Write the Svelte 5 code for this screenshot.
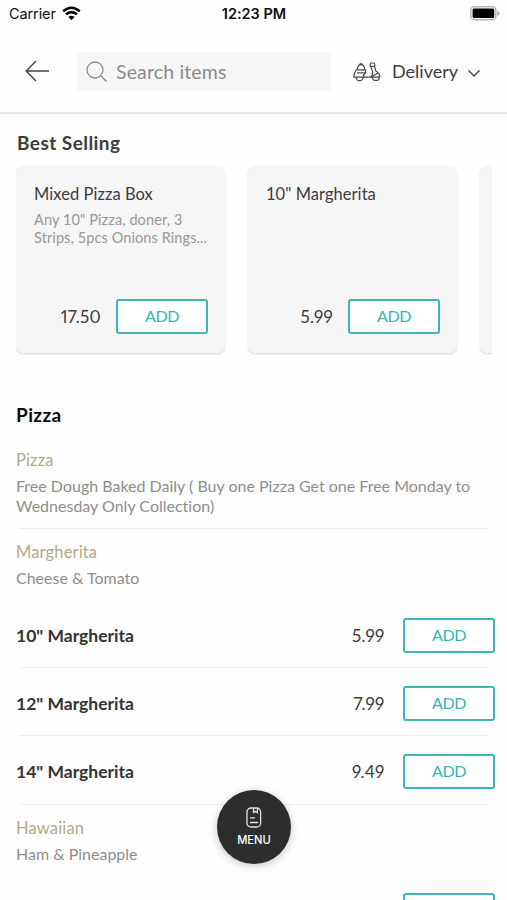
<script lang="ts">
  type Card = { name: string; desc: string; price: string };
  type Item = { name: string; price: string };
  type Group = { title: string; desc: string; items: Item[] };

  const bestSelling: Card[] = [
    { name: 'Mixed Pizza Box', desc: 'Any 10" Pizza, doner, 3 Strips, 5pcs Onions Rings...', price: '17.50' },
    { name: '10" Margherita', desc: '', price: '5.99' },
  ];

  const groups: Group[] = [
    {
      title: 'Pizza',
      desc: 'Free Dough Baked Daily ( Buy one Pizza Get one Free Monday to Wednesday Only Collection)',
      items: [],
    },
    {
      title: 'Margherita',
      desc: 'Cheese & Tomato',
      items: [
        { name: '10" Margherita', price: '5.99' },
        { name: '12" Margherita', price: '7.99' },
        { name: '14" Margherita', price: '9.49' },
      ],
    },
    {
      title: 'Hawaiian',
      desc: 'Ham & Pineapple',
      items: [{ name: '', price: '' }],
    },
  ];
</script>

<div class="screen">
  <div class="status">
    <div class="carrier">
      <span>Carrier</span>
      <svg width="19" height="15" viewBox="0 0 19 15" fill="none" stroke="#000" stroke-width="2.5">
        <path d="M1.2 5.2Q9.5 -1.8 17.8 5.2" />
        <path d="M4 8.4Q9.5 3.8 15 8.4" />
        <path d="M9.5 14.2L6.4 11.1Q9.5 8.6 12.6 11.1Z" fill="#000" stroke="none" />
      </svg>
    </div>
    <span class="clock">12:23 PM</span>
    <svg class="battery" width="31" height="15" viewBox="0 0 31 15">
      <rect x="1.8" y="0.8" width="25" height="13" rx="3.6" fill="#fff" stroke="#b5b5b5" stroke-width="1.5" />
      <rect x="3.6" y="2.6" width="21.6" height="9.4" rx="1.6" fill="#000" />
      <path d="M28.3 5v4.8q2.2-.8 2.2-2.4T28.3 5z" fill="#a8a8a8" />
    </svg>
  </div>

  <header class="header">
    <button class="back" aria-label="Back">
      <svg width="25" height="22" viewBox="0 0 25 22" fill="none" stroke="#444" stroke-width="1.4">
        <path d="M24 11H1.5M11 1L1.2 11L11 21" />
      </svg>
    </button>
    <div class="search">
      <svg width="21" height="21" viewBox="0 0 21 21" fill="none" stroke="#8b8b8b" stroke-width="1.3" stroke-linecap="round">
        <circle cx="9" cy="9" r="8" />
        <path d="M14.8 14.8L20 20" />
      </svg>
      <span>Search items</span>
    </div>
    <button class="mode">
      <svg width="28" height="20" viewBox="0 0 28 20" fill="none" stroke="#4a4a4a" stroke-width="1.2" stroke-linejoin="round">
        <path d="M4.2 7.8C4.4 4.2 5.4 2.6 8 2.6S11.6 4.2 11.8 7.8M6 3Q8 .4 10 3" />
        <path d="M3.4 7.8H12.6V10.8H4M3.4 7.8C1.6 9.8.8 12 .8 15.2H3.2M12.6 10.8Q10.2 12.8 10.4 15.2H17.8Q20 13 19.6 9.8L17.8 4.4" />
        <path d="M17.6 1H20.6Q21.8 1 21.8 2.2V4.4H17.4Q16.6 2.6 17.6 1ZM21.4 4.4L22.8 9Q26.6 10.8 26.8 14.8H25.4M17.8 15.2L25 11" />
        <path d="M3.2 15.2A3.5 3.5 0 0 0 10.2 15.2M3.2 15.2H10.4M19.6 15.2A3.3 3.3 0 0 0 26.2 15.2M17.8 15.2H26.8" />
      </svg>
      <span>Delivery</span>
      <svg class="chevron" width="12" height="7" viewBox="0 0 12 7" fill="none" stroke="#444" stroke-width="1.4" stroke-linecap="round">
        <path d="M.8.8L6 6L11.2.8" />
      </svg>
    </button>
  </header>

  <main>
    <h2 class="best-title">Best Selling</h2>
    <div class="cards">
      {#each bestSelling as card (card.name)}
        <article class="card">
          <h3>{card.name}</h3>
          <p>{card.desc}</p>
          <div class="buy">
            <span class="price">{card.price}</span>
            <button class="add">ADD</button>
          </div>
        </article>
      {/each}
      <article class="card"></article>
    </div>

    <h2 class="category">Pizza</h2>
    {#each groups as group, i (group.title)}
      <section class="group">
        <h4>{group.title}</h4>
        <p>{group.desc}</p>
        {#each group.items as item, j}
          {#if j > 0}<hr />{/if}
          <div class="row">
            <span class="name">{item.name}</span>
            <span class="price">{item.price}</span>
            <button class="add" aria-label="Add">{item.name ? 'ADD' : ''}</button>
          </div>
        {/each}
      </section>
      {#if i < groups.length - 1}<hr />{/if}
    {/each}
  </main>

  <button class="menu">
    <svg width="16" height="21" viewBox="0 0 16 21" fill="none" stroke="#e4e4e4" stroke-width="1.3" stroke-linejoin="round">
      <rect x="1" y="1" width="13.6" height="19" rx="3.8" />
      <path d="M7.5 1V5.8L9.5 4.4L11.5 5.8V1M4 10.8H9M4 15.5H12" />
    </svg>
    <span>MENU</span>
  </button>
</div>

<style>
  :global(body) {
    background: #fff;
  }
  .screen {
    position: relative;
    width: 507px;
    height: 900px;
    overflow: hidden;
    display: flex;
    flex-direction: column;
    background: #fefefe;
    color: #3c3c3c;
    font-family: Lato, 'Open Sans', sans-serif;
    font-variant-ligatures: none;
  }
  h2, h3, h4, p {
    margin: 0;
  }
  button {
    padding: 0;
    border: none;
    background: none;
    color: inherit;
    font: inherit;
  }
  svg {
    display: block;
    flex-shrink: 0;
  }
  hr {
    height: 1px;
    margin: 0 6px 0 3px;
    border: none;
    background: #efefef;
  }

  .status {
    height: 27px;
    flex-shrink: 0;
    display: grid;
    grid-template-columns: 1fr auto 1fr;
    align-items: center;
    padding: 0 7px 0 9px;
    box-sizing: border-box;
    font-family: Inter, sans-serif;
    font-size: 14.5px;
    color: #111;
  }
  .carrier {
    display: flex;
    align-items: center;
    gap: 6px;
    letter-spacing: -0.1px;
  }
  .clock {
    font-weight: 600;
    margin-right: 1px;
  }
  .battery {
    justify-self: end;
  }

  .header {
    height: 87px;
    flex-shrink: 0;
    box-sizing: border-box;
    display: flex;
    align-items: center;
    padding: 3px 27px 0 25px;
    border-bottom: 2px solid #e6e6e6;
  }
  .search {
    width: 254px;
    height: 39px;
    margin-left: 27px;
    padding-left: 9px;
    box-sizing: border-box;
    display: flex;
    align-items: center;
    gap: 9px;
    border-radius: 4px;
    background: #f6f6f6;
    color: #8b8b8b;
    font-size: 19.5px;
    letter-spacing: 0.15px;
  }
  .mode {
    flex: 1;
    margin-left: 22px;
    display: flex;
    align-items: center;
    font-size: 18px;
  }
  .mode span {
    margin-left: 11px;
  }
  .mode svg:first-child {
    margin-top: 2px;
  }
  .chevron {
    margin: 5px 0 0 auto;
  }

  main {
    padding: 0 12px 0 16px;
  }
  .best-title {
    margin: 17px 0 0 1px;
    font-size: 19px;
    line-height: 24px;
    letter-spacing: 0.45px;
  }
  .cards {
    display: flex;
    gap: 23px;
    margin: 11px 3px 0 0;
    padding-bottom: 4px;
    overflow: hidden;
  }
  .card {
    width: 209px;
    height: 187px;
    flex-shrink: 0;
    box-sizing: border-box;
    display: flex;
    flex-direction: column;
    padding: 17px 17px 19px 18px;
    border-radius: 7px;
    background: #f6f6f6;
    box-shadow: 0 1px 2px rgba(0, 0, 0, 0.16);
  }
  .card h3 {
    font-size: 16.5px;
    font-weight: 400;
    line-height: 22px;
    letter-spacing: 0.05px;
  }
  .card p {
    margin-top: 6px;
    font-size: 14.5px;
    line-height: 18px;
    letter-spacing: 0.1px;
    color: #989898;
  }
  .buy {
    margin-top: auto;
    display: flex;
    align-items: center;
    justify-content: flex-end;
    gap: 15px;
  }
  .price {
    font-size: 17px;
    letter-spacing: 0.25px;
    font-variant-numeric: proportional-nums;
  }
  .add {
    width: 92px;
    height: 35px;
    padding-bottom: 2px;
    box-sizing: border-box;
    border: 2px solid #3cb6b6;
    border-radius: 3px;
    background: #fff;
    color: #35b5b3;
    font-size: 16px;
    letter-spacing: -0.4px;
  }

  .category {
    margin: 46px 0 21px;
    color: #0c0c0c;
    font-size: 19px;
    line-height: 24px;
    letter-spacing: 0.4px;
  }
  .group {
    padding: 1px 0 13px;
  }
  .group h4 {
    color: #b3a989;
    font-size: 16.5px;
    font-weight: 400;
    line-height: 22px;
    letter-spacing: 0.15px;
  }
  .group p {
    margin-top: 5px;
    color: #8e8e8e;
    font-size: 16px;
    line-height: 19.5px;
  }
  hr + .group {
    padding: 12px 0 0;
  }
  hr + .group p {
    margin: 5px 0 12px;
  }
  .row {
    display: flex;
    align-items: center;
    height: 67.4px;
    padding-top: 4px;
    box-sizing: border-box;
  }
  .row .name {
    flex: 1;
    color: #333;
    font-size: 17.5px;
    font-weight: 700;
  }
  .row .add {
    margin-left: 18.5px;
  }

  .menu {
    position: absolute;
    left: 217px;
    top: 790px;
    width: 74px;
    height: 74px;
    display: flex;
    flex-direction: column;
    align-items: center;
    padding-top: 17px;
    box-sizing: border-box;
    gap: 5px;
    border-radius: 50%;
    background: #2d2d2d;
    box-shadow: 0 2px 8px rgba(0, 0, 0, 0.22);
    color: #fff;
    font-family: Inter, sans-serif;
    font-size: 11.2px;
    font-weight: 500;
  }
</style>
